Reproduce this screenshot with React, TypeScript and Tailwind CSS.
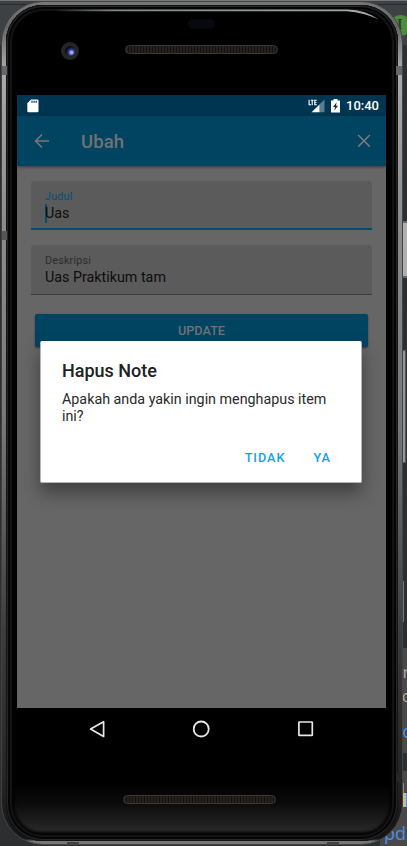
import React from "react";

function StatusBar() {
  return (
    <div className="flex h-[21px] items-center bg-[#003551] pr-[7px] pl-[10px] text-white">
      <svg width="12" height="14" viewBox="0 0 12 14">
        <path d="M4 .5H10.2Q11.5.5 11.5 1.8V12Q11.5 13.3 10.2 13.3H1.5Q.3 13.3.3 12V4.3Z" fill="white" />
        <path d="M4.4 1.8h1.2v2H4.4zM6.5 1.8h1.2v2H6.5zM8.6 1.8h1.2v2H8.6z" fill="#003551" />
      </svg>
      <div className="ml-auto flex items-center gap-[6px]">
        <svg width="17" height="14" viewBox="0 0 17 14">
          <path d="M11.5 5.2 16.5.5V13.2H11.5Z" fill="#587b8f" />
          <path d="M3.5 13.2 11.5 5.6V13.2Z" fill="white" />
          <path d="M1.1 .8V5.7H3M2.8 1.2H5.6M4.2 1.2V6.2M8.8 1.2H6.8V5.8H8.8M6.8 3.5H8.4" fill="none" stroke="white" strokeWidth="1.1" />
        </svg>
        <svg width="9" height="14" viewBox="0 0 9 14">
          <path d="M2.5 0H6.5V1.4H9V13.5H0V1.4H2.5Z" fill="white" />
          <path d="M5.6 3.3 2 8.1H4L3.4 11.6 7 6.8H5Z" fill="#003551" />
        </svg>
        <span className="w-[33px] pt-px text-[13px] leading-[20px] font-medium">10:40</span>
      </div>
    </div>
  );
}

function Toolbar() {
  return (
    <div className="z-10 flex h-[50px] items-center bg-[#004462] pr-[15px] pl-[17px] shadow-[0_1px_3px_rgba(0,0,0,0.45)]">
      <svg width="16" height="16" viewBox="0 0 16 16" fill="none" stroke="#777" strokeWidth="1.6">
        <path d="M15 8H2M8 1.5 1.5 8 8 14.5" />
      </svg>
      <span className="ml-[31px] pt-px text-[18.5px] leading-6 font-medium tracking-[0.1px] text-[#707273]">Ubah</span>
      <svg className="ml-auto" width="14" height="14" viewBox="0 0 14 14" fill="none" stroke="#7a7a7a" strokeWidth="1.5">
        <path d="M1.2 1 12.8 12.6M12.8 1 1.2 12.6" />
      </svg>
    </div>
  );
}

function Form() {
  return (
    <div className="flex flex-col px-[14px] pt-[15px]">
      <div className="flex h-[49px] flex-col rounded-t-[4px] border-b-2 border-[#004e72] bg-[#5b5b5b] px-[14px] pt-[8px]">
        <label className="pt-px text-[10.7px] leading-[13px] tracking-[0.25px] text-[#005178]">Judul</label>
        <div className="flex items-center text-[14.3px] leading-[20px] text-[#0d0d0d]">
          <span className="-mr-[1.5px] h-[19px] w-[1.5px] bg-[#004e72]" />
          Uas
        </div>
      </div>
      <div className="mt-[15px] flex h-[50px] flex-col rounded-t-[4px] border-b border-[#3d3d3d] bg-[#5b5b5b] px-[14px] pt-[8px]">
        <label className="pt-px text-[10.7px] leading-[14px] tracking-[0.25px] text-[#2c2c2c]">Deskripsi</label>
        <div className="text-[14.3px] leading-[18px] text-[#0d0d0d]">Uas Praktikum tam</div>
      </div>
      <button className="mt-[19px] mr-[4px] ml-[4px] h-[33px] rounded-[2px] bg-[#004462] text-[12.7px] leading-[34px] font-medium text-[#707273] shadow-[0_1px_2px_rgba(0,0,0,0.45)]">
        UPDATE
      </button>
    </div>
  );
}

function Dialog() {
  return (
    <div className="absolute inset-0 z-20 flex items-start justify-center pt-[246px] pr-[1px]">
      <div className="flex h-[142px] w-[322px] flex-col rounded-[2px] border border-[#b5b5b5] border-t-white bg-white px-[21px] shadow-[0_10px_18px_rgba(0,0,0,0.38)]">
        <h2 className="pt-[17px] text-[18px] leading-[24px] font-medium text-[#212121]">Hapus Note</h2>
        <p className="pt-[8px] text-[14.3px] leading-[17px] whitespace-nowrap text-[#2a2a2a]">
          Apakah anda yakin ingin menghapus item
          <br />
          ini?
        </p>
        <div className="flex justify-end gap-[28px] pt-[24px] pr-[9px] text-[12.7px] leading-[18px] font-medium tracking-[1px] text-[#10a2ee]">
          <button>TIDAK</button>
          <button>YA</button>
        </div>
      </div>
    </div>
  );
}

function Speaker() {
  return (
    <div className="h-[9px] w-[153px] rounded-full border border-[#3a3937] bg-[repeating-linear-gradient(90deg,#25221c_0px,#25221c_2px,#13120f_2px,#13120f_3px)]" />
  );
}

function TopBezel() {
  return (
    <div className="flex h-[90px] flex-col pt-[14px]">
      <div className="h-[10px] w-[27px] translate-x-[171px] rounded-full bg-[#08090e]" />
      <div className="flex gap-[46px] pt-[13px] pl-[44px]">
        <div className="flex h-[18px] w-[18px] items-center justify-center rounded-full bg-[#252525]">
          <div className="h-[10px] w-[10px] rounded-full bg-[radial-gradient(circle_at_65%_65%,#9daaff_0_12%,#303f94_32%,#0a0b19_60%)]" />
        </div>
        <div className="pt-[3px]">
          <Speaker />
        </div>
      </div>
    </div>
  );
}

function NavBar() {
  return (
    <nav className="flex h-[42px] items-center justify-between pr-[74px] pl-[72px]">
      <svg width="16" height="18" viewBox="0 0 16 18" fill="none" stroke="#e8e8e8" strokeWidth="1.7" strokeLinejoin="round">
        <path d="M14.6 1.7V16.4L1.6 9Z" />
      </svg>
      <svg width="18" height="18" viewBox="0 0 18 18" fill="none" stroke="#e8e8e8" strokeWidth="1.8">
        <circle cx="8.2" cy="9" r="7.5" />
      </svg>
      <svg width="16" height="16" viewBox="0 0 16 16" fill="none" stroke="#e8e8e8" strokeWidth="1.7">
        <rect x=".9" y="1" width="13.4" height="13.4" rx=".5" />
      </svg>
    </nav>
  );
}

function Backdrop() {
  return (
    <div className="absolute inset-0 flex flex-col overflow-hidden bg-[#2d2e2f]">
      <div className="flex h-[45px] shrink-0 flex-col border-t border-[#777] bg-[#3d4144]">
        <div className="mt-[3px] h-px shrink-0 bg-[#292b2c]" />
        <div className="mt-[10px] -mr-[4px] h-[21px] w-[21px] shrink-0 self-end rounded-full bg-[#4e8d3e] pl-[7px] font-['Liberation_Serif',serif] text-[14px] leading-[20px] font-bold text-[#263f22]">
          I
        </div>
      </div>
      <div className="flex grow flex-col items-end">
        <div className="mt-[176px] h-[57px] w-[5px] border-y-2 border-l border-[#686868] bg-[#b0b0b0]" />
        <div className="mt-[72px] mr-px h-[113px] w-[4px] border border-[#555] bg-[#969696]" />
        <div className="mt-[118px] mr-[3px] h-[41px] w-px bg-[#777]" />
        <div className="mt-[26px] flex h-[105px] w-[27px] flex-col items-end bg-[#49494a] pt-[12px] font-['Open_Sans',sans-serif] leading-[24px]">
          <span className="-mr-[6px] text-[17px] text-[#b0aaa2]">n</span>
          <span className="-mr-[5px] text-[17px] text-[#b0aaa2]">o</span>
          <span className="-mr-[6px] pt-[11px] text-[18px] text-[#4c8fe8]">o</span>
        </div>
        <div className="mt-[18px] flex h-[75px] w-[27px] flex-col items-end bg-[#49494a] pt-[12px]">
          <div className="mr-[3px] h-[10px] w-px bg-[#888]" />
          <div className="h-[14px] w-[4px] border-r border-[#4c8fe8] bg-[#c9b798]" />
          <span className="-mr-[9px] pt-[16px] font-['Open_Sans',sans-serif] text-[18px] leading-5 text-[#4c8fe8]">pda</span>
        </div>
      </div>
    </div>
  );
}

function RimDetails() {
  return (
    <svg className="pointer-events-none absolute inset-0" width="402" height="844" viewBox="0 0 402 844">
      <defs>
        <linearGradient id="edge" x1="0" x2="1">
          <stop offset="0" stopColor="#90a0a0" stopOpacity="0" />
          <stop offset=".2" stopColor="#7d8585" />
          <stop offset="1" stopColor="#a0a6a6" />
        </linearGradient>
      </defs>
      <path d="M53 7.4H345V9.2H53Z" fill="url(#edge)" />
      <path d="M345 7.4Q364 8 377 17.5Q362 10.5 345 9.2Z" fill="#a6aaaa" />
      <path d="M0 64h5v9H0zM394 64h6v9h-6z" fill="#66666a" />
      <path d="M0 229h5v9H0z" fill="#555" />
      <path d="M394 771h6v9h-6z" fill="#262626" />
      <path d="M65 840h12v2H65zM325 840h12v2h-12z" fill="#444" />
    </svg>
  );
}

export default function App() {
  return (
    <div className="relative h-[846px] w-[407px] overflow-hidden font-['Roboto',sans-serif]">
      <Backdrop />
      <div className="relative flex h-full flex-col px-px pt-px">
        <div className="relative h-[844px] w-[402px] overflow-hidden rounded-[42px] border border-[#444] bg-[linear-gradient(180deg,#777_0%,#666_3%,#aaa_8%,#8d8d8d_25%,#777_50%,#3c3c3c_75%,#252525_92%,#151515_99.4%,#777_99.7%,#777_100%)] px-[4px] pt-[3px] pb-[3px]">
          <div className="flex h-full flex-col rounded-[37px] bg-[linear-gradient(180deg,#000_0%,#000_93%,#0b0b0b_95.5%,#272727_98.7%,#050505_99.4%,#000_100%)] pr-[10px] pl-[11px] shadow-[inset_0_0_0_1px_#141414,inset_0_0_0_2px_#262626,inset_0_0_0_4px_#050505,inset_0_0_1px_6px_#151515,inset_0_0_3px_8px_#020202]">
            <TopBezel />
            <main className="relative flex h-[613px] w-[369px] shrink-0 flex-col overflow-hidden bg-[#666]">
              <StatusBar />
              <Toolbar />
              <Form />
              <Dialog />
            </main>
            <NavBar />
            <div className="flex justify-center pt-[45px] pr-[7px]">
              <Speaker />
            </div>
          </div>
          <RimDetails />
        </div>
      </div>
    </div>
  );
}
